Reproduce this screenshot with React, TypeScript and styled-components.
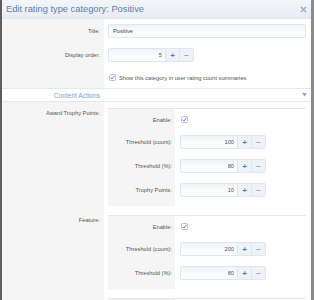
import React from "react";
import { createGlobalStyle, styled } from "styled-components";

const GlobalStyle = createGlobalStyle`
	html, body {
		margin: 0;
		padding: 0;
		background: #fff;
	}
	body {
		font-family: "Liberation Sans", Arial, sans-serif;
		color: #555;
	}
`;

const CheckIcon = () => (
	<svg width="7" height="7" viewBox="0 0 7 7">
		<rect x="0.5" y="0.5" width="6" height="6" rx="1" fill="#fff" stroke="#b3c5db" />
		<path d="M1.6 3.6 L3 5 L5.6 1.6" fill="none" stroke="#5a88c4" strokeWidth="1" />
	</svg>
);

const Checkbox = () => (
	<CheckWrap>
		<CheckIcon />
	</CheckWrap>
);

interface ISpinner {
	value: number;
}

const Spinner = ({ value }: ISpinner) => (
	<SpinBox>
		<SpinInput>{value}</SpinInput>
		<SpinButton $plus>+</SpinButton>
		<SpinButton>−</SpinButton>
	</SpinBox>
);

interface INestedField {
	label: string;
	value?: number;
	first?: boolean;
}

const NestedField = ({ label, value, first }: INestedField) => (
	<NestedRow $first={first}>
		<NestedLabel>{label}</NestedLabel>
		<NestedValue>{value === undefined ? <Checkbox /> : <Spinner value={value} />}</NestedValue>
	</NestedRow>
);

export default function App() {
	return (
		<>
			<GlobalStyle />
			<Dialog>
				<Header>
					<Title>Edit rating type category: Positive</Title>
					<Close>
						<svg width="7" height="7" viewBox="0 0 7 7">
							<path d="M1 1 L6 6 M6 1 L1 6" stroke="#a3b3c6" strokeWidth="1.7" />
						</svg>
					</Close>
				</Header>
				<Body>
					<Row>
						<Label>Title:</Label>
						<Value>
							<TextInput>Positive</TextInput>
						</Value>
					</Row>
					<Row>
						<Label>Display order:</Label>
						<Value>
							<Spinner value={5} />
						</Value>
					</Row>
					<Row>
						<Label />
						<Value $tall>
							<Checkbox />
							<CheckText>Show this category in user rating count summaries</CheckText>
						</Value>
					</Row>
					<SectionHead>
						<SectionTitle>Content Actions</SectionTitle>
						<svg width="5" height="4" viewBox="0 0 5 4">
							<path d="M0 0 L5 0 L2.5 3.5 Z" fill="#8ea5c0" />
						</svg>
					</SectionHead>
					<Row>
						<Label $top>Award Trophy Points:</Label>
						<Value $nested>
							<NestedBox>
								<NestedField label="Enable:" first />
								<NestedField label="Threshold (count):" value={100} />
								<NestedField label="Threshold (%):" value={80} />
								<NestedField label="Trophy Points:" value={10} />
							</NestedBox>
						</Value>
					</Row>
					<Row>
						<Label $top>Feature:</Label>
						<Value $nested>
							<NestedBox>
								<NestedField label="Enable:" first />
								<NestedField label="Threshold (count):" value={200} />
								<NestedField label="Threshold (%):" value={80} />
							</NestedBox>
						</Value>
					</Row>
					<Row>
						<Label $top />
						<Value $nested>
							<NestedBox>
								<NestedRow $first>
									<NestedLabel />
									<NestedValue />
								</NestedRow>
							</NestedBox>
						</Value>
					</Row>
				</Body>
			</Dialog>
		</>
	);
}

const Dialog = styled.div`
	width: 314px;
	height: 300px;
	box-sizing: border-box;
	overflow: hidden;
	border-left: 2px solid #5e5e5e;
	border-right: 3px solid #8c8c8c;
	background: #fff;
	display: flex;
	flex-direction: column;
`;
const Header = styled.div`
	flex: none;
	height: 19px;
	box-sizing: border-box;
	display: flex;
	align-items: center;
	justify-content: space-between;
	padding: 0 4px 0 4px;
	background: linear-gradient(#f3f6fa, #e7edf4);
	border-bottom: 1px solid #e1e7ee;
`;
const Title = styled.h2`
	margin: 0;
	font-size: 9.3px;
	font-weight: normal;
	color: #5d7ea8;
	white-space: nowrap;
`;
const Close = styled.span`
	display: flex;
	margin-top: 1px;
`;
const Body = styled.div`
	display: flex;
	flex-direction: column;
`;
const Row = styled.div`
	display: grid;
	grid-template-columns: 102px 1fr;
`;
const Label = styled.div<{ $top?: boolean }>`
	background: #f5f5f5;
	font-size: 5.7px;
	line-height: 8px;
	color: #555;
	text-align: right;
	padding: ${({ $top }) => ($top ? "7px 4px 0 0" : "0 4px 0 0")};
	display: flex;
	justify-content: flex-end;
	align-items: ${({ $top }) => ($top ? "flex-start" : "center")};
	white-space: nowrap;
`;
const Value = styled.div<{ $tall?: boolean; $nested?: boolean }>`
	display: flex;
	align-items: center;
	gap: 2px;
	padding: ${({ $tall, $nested }) => ($nested ? "6px 5px 3px 4px" : $tall ? "5px 4px" : "5px 5px 5px 4px")};
	min-height: ${({ $tall }) => ($tall ? "11px" : "0")};
`;
const TextInput = styled.div`
	flex: 1;
	height: 14px;
	box-sizing: border-box;
	border: 1px solid #dfe6ee;
	border-radius: 2px;
	background: linear-gradient(#eef3f9, #fbfcfe 60%);
	font-size: 5.7px;
	color: #444;
	display: flex;
	align-items: center;
	padding-left: 4px;
`;
const SpinBox = styled.div`
	display: flex;
	width: 86px;
	height: 14px;
	box-sizing: border-box;
	border: 1px solid #dfe6ee;
	border-radius: 2px;
	overflow: hidden;
`;
const SpinInput = styled.div`
	flex: 1;
	background: linear-gradient(#eef3f9, #fbfcfe 60%);
	font-size: 5.7px;
	color: #555;
	display: flex;
	align-items: center;
	justify-content: flex-end;
	padding-right: 3px;
`;
const SpinButton = styled.div<{ $plus?: boolean }>`
	width: 13px;
	background: #eef3f9;
	border-left: 1px solid #e0e7ef;
	display: flex;
	align-items: center;
	justify-content: center;
	font-size: 8px;
	font-weight: bold;
	color: ${({ $plus }) => ($plus ? "#4a80c4" : "#8fa9c9")};
`;
const CheckWrap = styled.span`
	display: flex;
	align-items: center;
	margin-left: 1px;
`;
const CheckText = styled.span`
	font-size: 5.7px;
	color: #555;
	white-space: nowrap;
	margin-left: 1px;
`;
const SectionHead = styled.div`
	display: grid;
	grid-template-columns: 102px 1fr auto;
	align-items: center;
	height: 14px;
	box-sizing: border-box;
	border-top: 1px solid #e4e9ef;
	border-bottom: 1px solid #e4e9ef;
	padding-right: 4px;

	& > svg {
		grid-column: 3;
	}
`;
const SectionTitle = styled.div`
	font-size: 6.6px;
	color: #7ea2cb;
	text-align: right;
	padding-right: 4px;
	white-space: nowrap;
`;
const NestedBox = styled.div`
	flex: 1;
	display: flex;
	flex-direction: column;
	padding-bottom: 4px;
	background: linear-gradient(to right, #f5f5f5 67px, #fff 67px);
`;
const NestedRow = styled.div<{ $first?: boolean }>`
	display: grid;
	grid-template-columns: 67px 1fr;
	height: ${({ $first }) => ($first ? "22px" : "24px")};
	border-top: ${({ $first }) => ($first ? "1px solid #e6e6e6" : "none")};
	box-sizing: border-box;
`;
const NestedLabel = styled.div`
	background: #f5f5f5;
	font-size: 5.7px;
	color: #555;
	display: flex;
	align-items: center;
	justify-content: flex-end;
	padding-right: 3px;
	white-space: nowrap;
`;
const NestedValue = styled.div`
	display: flex;
	align-items: center;
	padding-left: 5px;
	background: #fff;
`;
